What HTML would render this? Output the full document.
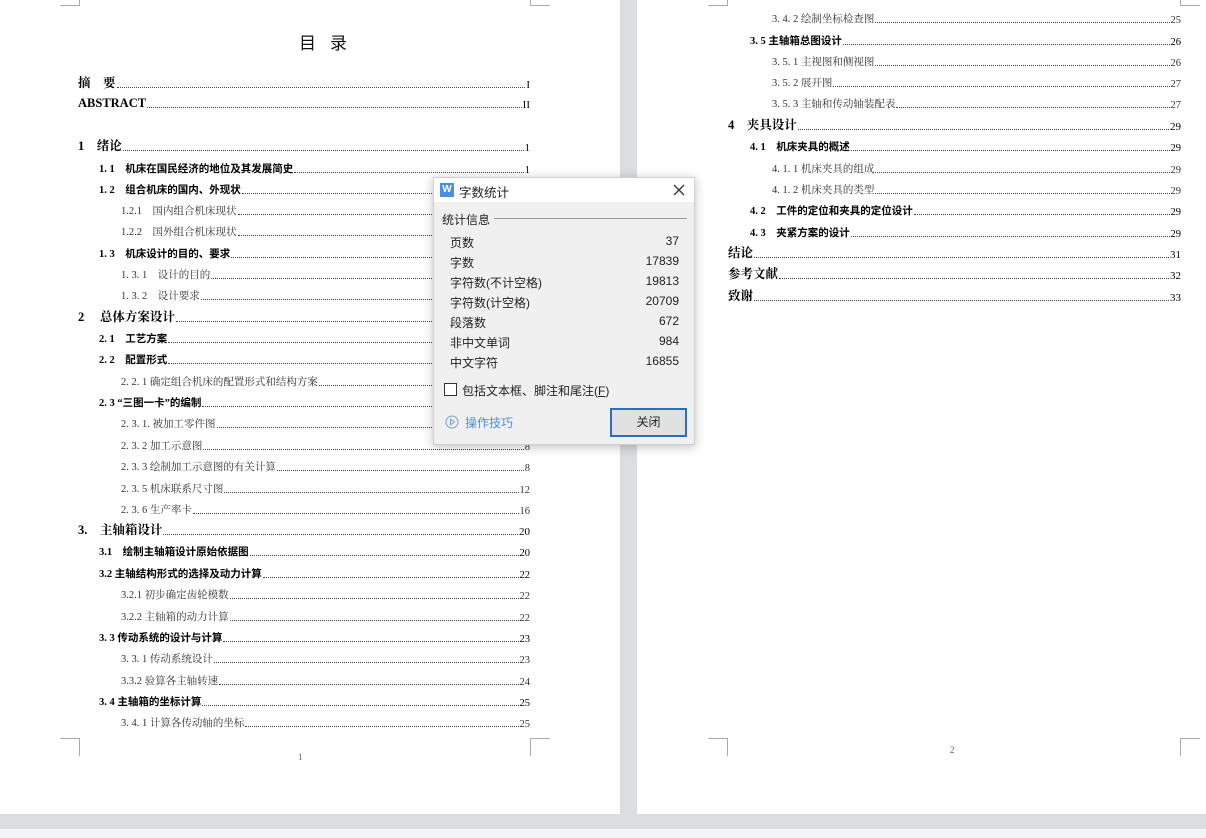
<!DOCTYPE html>
<html><head><meta charset="utf-8">
<style>
*{margin:0;padding:0;box-sizing:border-box}
body{width:1206px;height:838px;overflow:hidden;background:#fff;position:relative;font-family:"Liberation Serif","Noto Serif CJK SC","Noto Sans CJK SC",serif;color:#111}
.e{position:absolute;display:flex;align-items:flex-end;height:16px;font-size:10.5px;white-space:nowrap;color:#333}
.e i{flex:1;border-bottom:1px dotted #444;margin:0 1px 3px 1px;height:1px}
.e b{font-weight:normal}
.e.h{font-weight:bold;color:#000;font-family:"Liberation Serif","Noto Sans CJK SC",sans-serif}
.e.h b{font-weight:normal}
.e.t{font-size:12.5px;font-weight:bold;color:#000}
.e.t b{font-weight:normal;font-size:11px}
.L1{left:78px;width:452px}.L2{left:99px;width:431px}.L3{left:121px;width:409px}
.R1{left:728px;width:453px}.R2{left:750px;width:431px}.R3{left:772px;width:409px}
.cm{position:absolute;border-color:#aaa;border-style:solid;width:20px;height:18px}
.gray{position:absolute;background:#dcdddf}
.dlg{position:absolute;left:433px;top:177px;width:262px;height:268px;background:#f0f0f0;border:1px solid #cfcfcf;box-shadow:0 2px 10px rgba(0,0,0,.25);font-family:"Liberation Sans","Noto Sans CJK SC",sans-serif;font-size:12px;color:#222}
.row{position:absolute;left:16px;width:229px;display:flex;justify-content:space-between}
</style></head><body>
<div class="gray" style="left:620px;top:0;width:17px;height:838px"></div>
<div class="gray" style="left:0;top:814px;width:1206px;height:15px"></div>
<div style="position:absolute;left:0;top:829px;width:1206px;height:9px;background:#f3f4f6"></div>
<div class="cm" style="left:60px;top:-12px;border-width:0 1px 1px 0"></div>
<div class="cm" style="left:530px;top:-12px;border-width:0 0 1px 1px"></div>
<div class="cm" style="left:60px;top:738px;border-width:1px 1px 0 0"></div>
<div class="cm" style="left:530px;top:738px;border-width:1px 0 0 1px"></div>
<div class="cm" style="left:708px;top:-12px;border-width:0 1px 1px 0"></div>
<div class="cm" style="left:1180px;top:-12px;border-width:0 0 1px 1px"></div>
<div class="cm" style="left:708px;top:738px;border-width:1px 1px 0 0"></div>
<div class="cm" style="left:1180px;top:738px;border-width:1px 0 0 1px"></div>
<div style="position:absolute;left:298px;top:752px;font-size:9px;color:#666">1</div>
<div style="position:absolute;left:950px;top:745px;font-size:9px;color:#666">2</div>

<div style="position:absolute;left:299px;top:29px;font-size:17px;font-family:'Noto Sans CJK SC',sans-serif;letter-spacing:14px">目录</div>

<div class="e t L1" style="top:75px"><span>摘　要</span><i></i><b>I</b></div>
<div class="e t L1" style="top:95px"><span>ABSTRACT</span><i></i><b>II</b></div>
<div class="e t L1" style="top:138px"><span>1　绪论</span><i></i><b>1</b></div>
<div class="e h L2" style="top:160px"><span>1. 1　机床在国民经济的地位及其发展简史</span><i></i><b>1</b></div>
<div class="e h L2" style="top:181px"><span>1. 2　组合机床的国内、外现状</span><i></i><b>1</b></div>
<div class="e L3" style="top:202px"><span>1.2.1　国内组合机床现状</span><i></i><b>2</b></div>
<div class="e L3" style="top:223px"><span>1.2.2　国外组合机床现状</span><i></i><b>3</b></div>
<div class="e h L2" style="top:245px"><span>1. 3　机床设计的目的、要求</span><i></i><b>4</b></div>
<div class="e L3" style="top:266px"><span>1. 3. 1　设计的目的</span><i></i><b>4</b></div>
<div class="e L3" style="top:287px"><span>1. 3. 2　设计要求</span><i></i><b>4</b></div>
<div class="e t L1" style="top:309px"><span>2　 总体方案设计</span><i></i><b>5</b></div>
<div class="e h L2" style="top:330px"><span>2. 1　工艺方案</span><i></i><b>5</b></div>
<div class="e h L2" style="top:351px"><span>2. 2　配置形式</span><i></i><b>5</b></div>
<div class="e L3" style="top:373px"><span>2. 2. 1 确定组合机床的配置形式和结构方案</span><i></i><b>5</b></div>
<div class="e h L2" style="top:394px"><span>2. 3 “三图一卡”的编制</span><i></i><b>6</b></div>
<div class="e L3" style="top:415px"><span>2. 3. 1. 被加工零件图</span><i></i><b>6</b></div>
<div class="e L3" style="top:437px"><span>2. 3. 2 加工示意图</span><i></i><b>8</b></div>
<div class="e L3" style="top:458px"><span>2. 3. 3 绘制加工示意图的有关计算</span><i></i><b>8</b></div>
<div class="e L3" style="top:480px"><span>2. 3. 5 机床联系尺寸图</span><i></i><b>12</b></div>
<div class="e L3" style="top:501px"><span>2. 3. 6 生产率卡</span><i></i><b>16</b></div>
<div class="e t L1" style="top:522px"><span>3.　主轴箱设计</span><i></i><b>20</b></div>
<div class="e h L2" style="top:543px"><span>3.1　绘制主轴箱设计原始依据图</span><i></i><b>20</b></div>
<div class="e h L2" style="top:565px"><span>3.2 主轴结构形式的选择及动力计算</span><i></i><b>22</b></div>
<div class="e L3" style="top:586px"><span>3.2.1 初步确定齿轮模数</span><i></i><b>22</b></div>
<div class="e L3" style="top:608px"><span>3.2.2 主轴箱的动力计算</span><i></i><b>22</b></div>
<div class="e h L2" style="top:629px"><span>3. 3 传动系统的设计与计算</span><i></i><b>23</b></div>
<div class="e L3" style="top:650px"><span>3. 3. 1 传动系统设计</span><i></i><b>23</b></div>
<div class="e L3" style="top:672px"><span>3.3.2 验算各主轴转速</span><i></i><b>24</b></div>
<div class="e h L2" style="top:693px"><span>3. 4 主轴箱的坐标计算</span><i></i><b>25</b></div>
<div class="e L3" style="top:714px"><span>3. 4. 1 计算各传动轴的坐标</span><i></i><b>25</b></div>

<div class="e R3" style="top:10px"><span>3. 4. 2 绘制坐标检查图</span><i></i><b>25</b></div>
<div class="e h R2" style="top:32px"><span>3. 5 主轴箱总图设计</span><i></i><b>26</b></div>
<div class="e R3" style="top:53px"><span>3. 5. 1 主视图和侧视图</span><i></i><b>26</b></div>
<div class="e R3" style="top:74px"><span>3. 5. 2 展开图</span><i></i><b>27</b></div>
<div class="e R3" style="top:95px"><span>3. 5. 3 主轴和传动轴装配表</span><i></i><b>27</b></div>
<div class="e t R1" style="top:117px"><span>4　夹具设计</span><i></i><b>29</b></div>
<div class="e h R2" style="top:138px"><span>4. 1　机床夹具的概述</span><i></i><b>29</b></div>
<div class="e R3" style="top:160px"><span>4. 1. 1 机床夹具的组成</span><i></i><b>29</b></div>
<div class="e R3" style="top:181px"><span>4. 1. 2 机床夹具的类型</span><i></i><b>29</b></div>
<div class="e h R2" style="top:202px"><span>4. 2　工件的定位和夹具的定位设计</span><i></i><b>29</b></div>
<div class="e h R2" style="top:224px"><span>4. 3　夹紧方案的设计</span><i></i><b>29</b></div>
<div class="e t R1" style="top:245px"><span>结论</span><i></i><b>31</b></div>
<div class="e t R1" style="top:266px"><span>参考文献</span><i></i><b>32</b></div>
<div class="e t R1" style="top:288px"><span>致谢</span><i></i><b>33</b></div>

<div class="dlg">
 <div style="position:absolute;left:0;top:0;width:260px;height:24px;background:#fff"></div>
 <div style="position:absolute;left:6px;top:5px;width:14px;height:14px;background:#4a8fe0;color:#fff;font-size:10px;line-height:14px;text-align:center;font-weight:bold">W</div>
 <div style="position:absolute;left:25px;top:4px;font-size:12.5px">字数统计</div>
 <svg style="position:absolute;left:239px;top:6px" width="12" height="12"><path d="M1 1L11 11M11 1L1 11" stroke="#333" stroke-width="1.3"/></svg>
 <div style="position:absolute;left:8px;top:33px">统计信息</div>
 <div style="position:absolute;left:60px;top:40px;width:193px;height:1px;background:#999"></div>
 <div class="row" style="top:56px"><span>页数</span><span>37</span></div>
 <div class="row" style="top:76px"><span>字数</span><span>17839</span></div>
 <div class="row" style="top:96px"><span>字符数(不计空格)</span><span>19813</span></div>
 <div class="row" style="top:116px"><span>字符数(计空格)</span><span>20709</span></div>
 <div class="row" style="top:136px"><span>段落数</span><span>672</span></div>
 <div class="row" style="top:156px"><span>非中文单词</span><span>984</span></div>
 <div class="row" style="top:176px"><span>中文字符</span><span>16855</span></div>
 <div style="position:absolute;left:10px;top:205px;width:13px;height:13px;border:1px solid #333;background:#fff"></div>
 <div style="position:absolute;left:28px;top:204px">包括文本框、脚注和尾注(<u>F</u>)</div>
 <svg style="position:absolute;left:11px;top:237px" width="14" height="14"><circle cx="7" cy="7" r="6" fill="none" stroke="#7aa0d0"/><path d="M5.5 4.2L9.5 7L5.5 9.8Z" fill="none" stroke="#7aa0d0"/></svg>
 <div style="position:absolute;left:31px;top:236px;color:#4a8fe0">操作技巧</div>
 <div style="position:absolute;left:176px;top:230px;width:77px;height:29px;border:2px solid #2a6ebf;background:#e1e1e1;text-align:center;line-height:25px">关闭</div>
</div>
</body></html>
